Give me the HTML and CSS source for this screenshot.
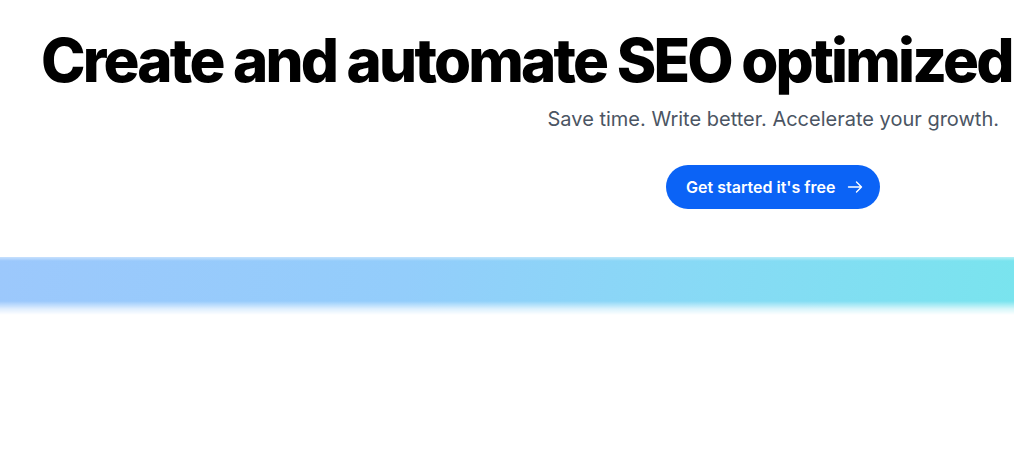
FILE: index.html
```html
<!DOCTYPE html>
<html lang="en">
<head>
<meta charset="utf-8">
<title>SEO</title>
<link rel="stylesheet" href="styles.css">
</head>
<body>
<main class="hero">
  <h1 class="title">Create and automate SEO optimized</h1>
  <div class="intro">
    <div class="intro-col">
      <p class="subtitle">Save time. Write better. Accelerate your growth.</p>
      <a class="cta" href="#">Get started it's free
        <svg class="cta-arrow" width="16" height="16" viewBox="0 0 16 16" fill="none" stroke="currentColor" stroke-width="1.4" stroke-linecap="round" stroke-linejoin="round"><path d="M1.5 8h13M9.5 3l5 5-5 5"/></svg>
      </a>
    </div>
  </div>
</main>
<div class="band"></div>
</body>
</html>
```
FILE: styles.css
```css
html, body {
  margin: 0;
  padding: 0;
  background: #ffffff;
  overflow: hidden;
}
body {
  font-family: Inter, "Noto Sans", sans-serif;
  width: 1014px;
  height: 473px;
}
.hero {
  display: flex;
  flex-direction: column;
  padding-top: 26px;
}
.title {
  margin: 0;
  padding-left: 41px;
  font-size: 60px;
  font-weight: 800;
  line-height: 68px;
  letter-spacing: -2.8px;
  color: #000;
  white-space: nowrap;
}
.intro {
  display: flex;
  justify-content: flex-end;
  padding-right: 15px;
}
.intro-col {
  display: flex;
  flex-direction: column;
  align-items: center;
}
.subtitle {
  margin: 11px 0 0;
  font-size: 20px;
  line-height: 28px;
  color: #4b5563;
}
.cta {
  margin-top: 32px;
  display: flex;
  align-items: center;
  gap: 12px;
  height: 44px;
  padding: 0 17px 0 20px;
  border-radius: 22px;
  background: #0b63f6;
  color: #fff;
  font-size: 16px;
  font-weight: 600;
  text-decoration: none;
}
.cta-arrow {
  display: block;
}
.band {
  margin-top: 48px;
  height: 58px;
  background: linear-gradient(100deg, #9cc8fc 0%, #93cdfb 40%, #87daf5 70%, #79e4ee 100%);
  -webkit-mask-image: linear-gradient(to bottom, rgba(0,0,0,0.55) 0px, #000 4px, #000 44px, rgba(0,0,0,0.3) 52px, transparent 58px);
  mask-image: linear-gradient(to bottom, rgba(0,0,0,0.55) 0px, #000 4px, #000 44px, rgba(0,0,0,0.3) 52px, transparent 58px);
}
```
